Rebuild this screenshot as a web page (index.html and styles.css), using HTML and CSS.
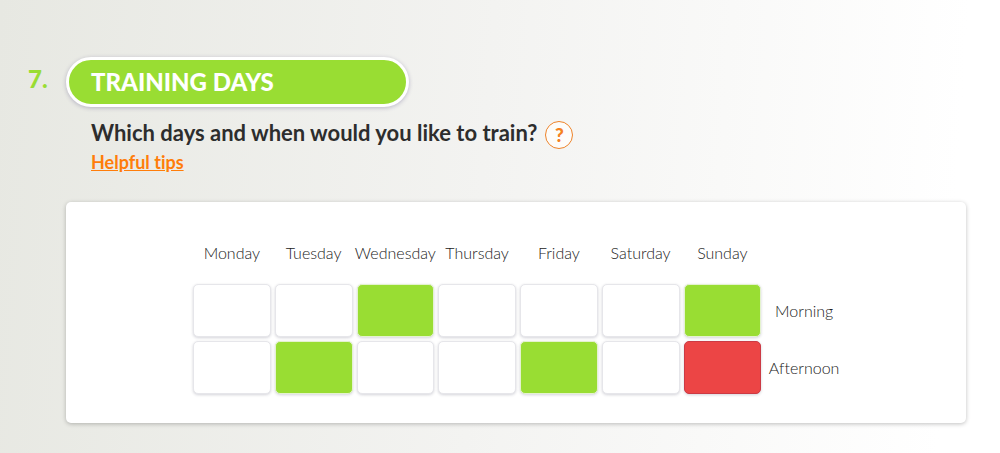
FILE: index.html
```
<!DOCTYPE html>
<html lang="en">
<head>
  <meta charset="UTF-8">
  <meta name="viewport" content="width=device-width, initial-scale=1">
  <title>Training days</title>
  <link rel="stylesheet" href="styles.css">
</head>
<body>

  <main class="question">
    <!-- Title -->
    <span class="question-number">7.</span>
    <h1 class="question-title">Training days</h1>

    <!-- Question and tips -->
    <div class="question-intro">
      <div class="question-line">
        <h2>Which days and when would you like to train?</h2>
        <button type="button" class="help-button" aria-label="Help">?</button>
      </div>
      <a href="#tips" class="tips-link">Helpful tips</a>
    </div>

    <!-- Day picker -->
    <section class="panel">
      <table class="days">
        <thead>
          <tr>
            <th scope="col">Monday</th>
            <th scope="col">Tuesday</th>
            <th scope="col">Wednesday</th>
            <th scope="col">Thursday</th>
            <th scope="col">Friday</th>
            <th scope="col">Saturday</th>
            <th scope="col">Sunday</th>
            <td></td>
          </tr>
        </thead>
        <tbody>
          <tr>
            <td><input type="checkbox" class="slot" aria-label="Monday morning"></td>
            <td><input type="checkbox" class="slot" aria-label="Tuesday morning"></td>
            <td><input type="checkbox" class="slot" aria-label="Wednesday morning" checked></td>
            <td><input type="checkbox" class="slot" aria-label="Thursday morning"></td>
            <td><input type="checkbox" class="slot" aria-label="Friday morning"></td>
            <td><input type="checkbox" class="slot" aria-label="Saturday morning"></td>
            <td><input type="checkbox" class="slot" aria-label="Sunday morning" checked></td>
            <th scope="row">Morning</th>
          </tr>
          <tr>
            <td><input type="checkbox" class="slot" aria-label="Monday afternoon"></td>
            <td><input type="checkbox" class="slot" aria-label="Tuesday afternoon" checked></td>
            <td><input type="checkbox" class="slot" aria-label="Wednesday afternoon"></td>
            <td><input type="checkbox" class="slot" aria-label="Thursday afternoon"></td>
            <td><input type="checkbox" class="slot" aria-label="Friday afternoon" checked></td>
            <td><input type="checkbox" class="slot" aria-label="Saturday afternoon"></td>
            <td><input type="checkbox" class="slot slot-blocked" aria-label="Sunday afternoon"></td>
            <th scope="row">Afternoon</th>
          </tr>
        </tbody>
      </table>
    </section>
  </main>

</body>
</html>
```

FILE: styles.css
```
* {
  margin: 0;
  padding: 0;
  box-sizing: border-box;
}

body {
  min-height: 100vh;
  font-family: Lato, "Open Sans", sans-serif;
  font-variant-ligatures: none;
  color: #2d2d2d;
  background: linear-gradient(94deg, #e7e8e2 0%, #f3f3f1 48%, #fff 94%);
}

/* QUESTION */
.question {
  display: grid;
  grid-template-columns: 38px 1fr;
  padding: 57px 34px 31px 28px;
}

.question-number {
  line-height: 44px;
  font-size: 24px;
  font-weight: 900;
  color: #99dd33;
}

.question-title {
  width: 343px;
  max-width: 100%;
  padding: 0 22px;
  border: 3px solid #fff;
  border-radius: 26px;
  background-color: #99dd33;
  box-shadow: 0 1px 4px rgba(60, 50, 110, 0.3);
  line-height: 44px;
  font-size: 24px;
  font-weight: 900;
  text-transform: uppercase;
  color: #fff;
}

.question-intro {
  grid-column: 2;
  padding: 14px 25px 0;
}

.question-line {
  display: flex;
  align-items: flex-start;
  gap: 8px;
}

.question-line h2 {
  line-height: 24px;
  font-size: 22px;
  font-weight: 700;
}

.help-button {
  width: 28px;
  height: 28px;
  border: 1px solid #ee8329;
  border-radius: 50%;
  background-color: #fdfcfa;
  font-family: inherit;
  font-size: 19px;
  font-weight: 900;
  line-height: 24px;
  color: #f5821f;
  cursor: pointer;
}

.tips-link {
  display: inline-block;
  line-height: 26px;
  font-size: 18px;
  font-weight: 700;
  color: #ff7d0a;
}

/* DAY PICKER */
.panel {
  grid-column: 2;
  margin-top: 27px;
  padding: 20px 20px 27px 24px;
  border-radius: 5px;
  background-color: #fff;
  box-shadow: 0 1px 4px rgba(0, 0, 0, 0.25);
}

.days {
  width: 654px;
  max-width: 100%;
  margin: 0 auto;
  table-layout: fixed;
  border-collapse: collapse;
  text-align: center;
}

.days th {
  font-size: 16px;
  font-weight: 300;
  line-height: 20px;
  color: #222;
}

.days thead th {
  padding: 21px 0 19px;
}

.days td {
  padding: 2px;
}

.slot {
  display: block;
  width: 100%;
  height: 53px;
  appearance: none;
  border: 1px solid #e6e6ea;
  border-radius: 5px;
  background-color: #fff;
  box-shadow: 0 1px 3px rgba(40, 40, 70, 0.2);
  cursor: pointer;
}

.slot:checked {
  border-color: #e4f2cf;
  background-color: #99dd33;
}

.slot-blocked {
  border-color: #cc3a44;
  background-color: #ec4545;
}
```
